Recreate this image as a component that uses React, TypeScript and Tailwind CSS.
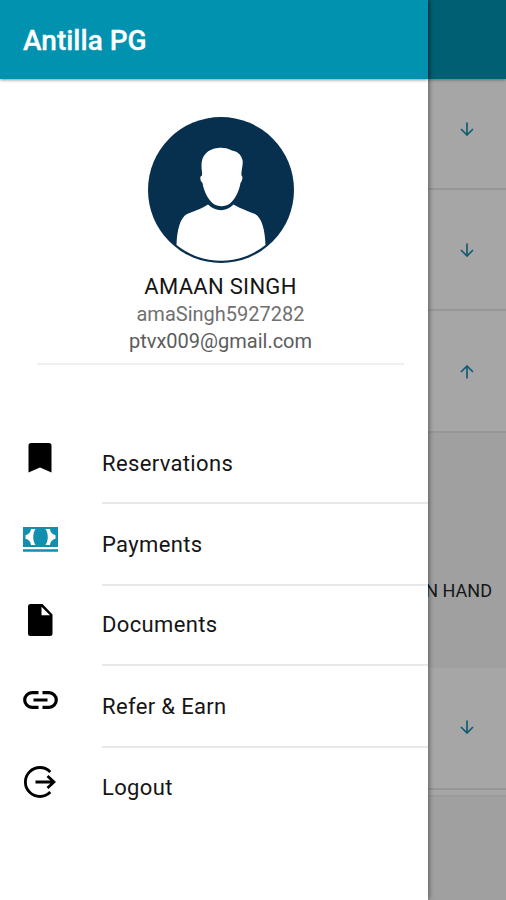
import React from "react";

interface MenuItem {
  label: string;
  icon: React.ReactNode;
  height: string;
  iconPadding: string;
  labelPadding: string;
}

const BookmarkIcon = () => (
  <svg className="h-[30px] w-6" viewBox="0 0 24 30" fill="#000">
    <path d="M3 0h18a2.500 2.500 0 0 1 2.500 2.500V29.500L12 24.600.5 29.500V2.500A2.500 2.500 0 0 1 3 0z" />
  </svg>
);

const CashIcon = () => (
  <svg className="h-[26px] w-[35px]" viewBox="0 0 35 26">
    <path fill="#118fae" d="M0 0h35v20H0zM0 22.200h35v2.600H0z" />
    <path
      fill="#fff"
      d="M8 2H12.500C9.500 6 9.500 14 12.500 18H8C7.800 14.500 5.800 12.700 2.500 11.800V8.200C5.800 7.300 7.800 5.500 8 2zM27 2H22.500C25.500 6 25.500 14 22.500 18H27C27.200 14.500 29.200 12.700 32.500 11.800V8.200C29.200 7.300 27.200 5.500 27 2z"
    />
  </svg>
);

const DocumentIcon = () => (
  <svg className="h-8 w-[25px]" viewBox="0 0 25 32">
    <path d="M2.500 0H14.500L24.500 10.500V29.500A2.500 2.500 0 0 1 22 32H2.500A2.500 2.500 0 0 1 0 29.500V2.500A2.500 2.500 0 0 1 2.500 0z" />
    <path fill="#fff" d="M13.500 2.800V11.200H22z" />
  </svg>
);

const LinkIcon = () => (
  <svg
    className="h-[18px] w-[35px]"
    viewBox="0 0 35 18"
    fill="none"
    stroke="#000"
    strokeWidth="3.200"
  >
    <path d="M15.500 1.700H9a7.300 7.300 0 0 0 0 14.600h6.500M19.500 1.700H26a7.300 7.300 0 0 1 0 14.600h-6.500M10.500 9h14" />
  </svg>
);

const LogoutIcon = () => (
  <svg
    className="h-8 w-8"
    viewBox="0 0 32 32"
    fill="none"
    stroke="#000"
    strokeWidth="2.800"
  >
    <path d="M26.300 5.900A14.500 14.500 0 1 0 26.300 26.100" />
    <path d="M11.500 16H30M23.500 10l6.500 6-6.500 6" />
  </svg>
);

const Avatar = () => (
  <svg className="h-[146px] w-[146px]" viewBox="0 0 146 146">
    <circle cx="73" cy="73" r="73" fill="#07304f" />
    <path
      fill="#fff"
      d="M60 87.500C52 92.500 46 94 39 97C32 101 29 113 28.500 128A71 71 0 0 0 117.500 128C117 113 114 101 107 97C100 94 93 92 85.500 87.500C78 95 68 95 60 87.500z"
    />
    <path
      fill="#fff"
      d="M70 31C60 32 53 38 53.500 50C53.500 53 54.500 56 54 58.500C51.500 59 52 64 54.500 66C56 75 60 82 65 86.500C70 90 77 90 82 86.500C87 82 91 75 92.500 66C94.500 64 95 59 93.500 58.500C93 54 95.500 47 94.500 43C93 37 89 34.500 84 33.500C79 31 74 30.500 70 31z"
    />
  </svg>
);

const Arrow = ({ up }: { up?: boolean }) => (
  <svg
    className={`h-[14px] w-[14px] ${up ? "rotate-180" : ""}`}
    viewBox="0 0 14 14"
    fill="none"
    stroke="#125d73"
    strokeWidth="1.700"
  >
    <path d="M7 0.500V13M1 7l6 6 6-6" />
  </svg>
);

const items: MenuItem[] = [
  {
    label: "Reservations",
    icon: <BookmarkIcon />,
    height: "h-[82px]",
    iconPadding: "pb-[10px]",
    labelPadding: "pt-[2px]",
  },
  {
    label: "Payments",
    icon: <CashIcon />,
    height: "h-[82px]",
    iconPadding: "pb-[11px]",
    labelPadding: "",
  },
  {
    label: "Documents",
    icon: <DocumentIcon />,
    height: "h-[80px]",
    iconPadding: "pb-[12px]",
    labelPadding: "pb-[2px]",
  },
  {
    label: "Refer & Earn",
    icon: <LinkIcon />,
    height: "h-[82px]",
    iconPadding: "pb-[14px]",
    labelPadding: "",
  },
  {
    label: "Logout",
    icon: <LogoutIcon />,
    height: "h-[82px]",
    iconPadding: "pb-[15px]",
    labelPadding: "pb-[4px]",
  },
];

const Drawer = () => (
  <aside className="relative z-10 flex h-full w-[428px] shrink-0 flex-col bg-white shadow-[1px_0_5px_rgba(0,0,0,0.45)]">
    <header className="flex h-[79px] shrink-0 items-center bg-[#0092af] pt-[3px] pl-[23px] shadow-[0_1px_3px_rgba(0,0,0,0.45)]">
      <h1 className="text-[28px] font-medium text-white [-webkit-text-stroke:0.300px_#fff]">
        Antilla PG
      </h1>
    </header>
    <section className="mr-6 ml-[37px] flex h-[286px] shrink-0 flex-col items-center border-b-2 border-[#f0f0f0] pt-[38px]">
      <Avatar />
      <p className="mt-[10px] text-[22px] leading-[28px] tracking-[0.3px] text-[#151515]">
        AMAAN SINGH
      </p>
      <p className="text-[20px] leading-[27px] text-[#707070]">
        amaSingh5927282
      </p>
      <p className="text-[20px] leading-[27px] text-[#5c5c5c]">
        ptvx009@gmail.com
      </p>
    </section>
    <nav className="mt-[57px]">
      {items.map((item, i) => (
        <a key={item.label} className={`flex ${item.height}`}>
          <span
            className={`flex w-[80px] shrink-0 items-center justify-center ${item.iconPadding}`}
          >
            {item.icon}
          </span>
          <span
            className={`ml-[22px] flex grow items-center text-[22px] tracking-[0.35px] text-[#151515] ${
              item.labelPadding
            } ${i < items.length - 1 ? "border-b-2 border-[#e8e8e8]" : ""}`}
          >
            {item.label}
          </span>
        </a>
      ))}
    </nav>
  </aside>
);

// Part of the dashboard that stays visible under the dimmed overlay
const Dashboard = () => (
  <main className="flex h-full min-w-0 grow flex-col overflow-hidden bg-[#a6a6a6]">
    <div className="h-[79px] shrink-0 bg-[#005f72] shadow-[0_1px_3px_rgba(0,0,0,0.35)]" />
    <div className="flex h-[111px] shrink-0 items-center justify-center border-b-2 border-[#979797] pb-[9px]">
      <Arrow />
    </div>
    <div className="flex h-[121px] shrink-0 items-center justify-center border-b-2 border-[#979797]">
      <Arrow />
    </div>
    <div className="flex h-[122px] shrink-0 items-center justify-center border-b-2 border-[#979797] pt-[2px]">
      <Arrow up />
    </div>
    <div className="flex h-[235px] shrink-0 items-center justify-end bg-[#a0a0a0] pt-[79px] pr-[14px] text-[18px] whitespace-nowrap text-[#161616]">
      N HAND
    </div>
    <div className="flex h-[122px] shrink-0 items-center justify-center border-b-2 border-[#969696] pb-[2px]">
      <Arrow />
    </div>
    <div className="mt-[5px] grow border-t-2 border-[#9c9c9c] bg-[#a0a0a0]" />
  </main>
);

export default function App() {
  return (
    <div className="flex h-[900px] w-[506px] overflow-hidden bg-white font-['Roboto',sans-serif]">
      <Drawer />
      <Dashboard />
    </div>
  );
}
